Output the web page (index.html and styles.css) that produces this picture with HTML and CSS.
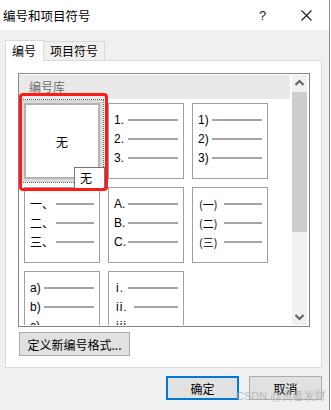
FILE: index.html
```html
<!DOCTYPE html>
<html lang="zh-CN">
<head>
  <meta charset="UTF-8">
  <title>编号和项目符号</title>
  <link rel="stylesheet" href="styles.css">
</head>
<body>
<div class="dialog">
  <div class="titlebar">
    <span class="title">编号和项目符号</span>
    <span class="help">?</span>
    <span class="close">
      <svg width="11" height="11" viewBox="0 0 11 11"><path d="M0.5 0.5 L10.5 10.5 M10.5 0.5 L0.5 10.5" stroke="#1a1a1a" stroke-width="1.1" fill="none"/></svg>
    </span>
  </div>

  <div class="content">
    <!-- 탭 -->
    <div class="tabs">
      <div class="tab on">编号</div>
      <div class="tab">项目符号</div>
    </div>

    <div class="panel">
      <div class="library">
        <div class="lib-main">
          <div class="lib-head">编号库</div>
          <div class="grid">
            <div class="cell sel"><span class="none">无</span></div>
            <div class="cell">
              <div class="row"><span>1.</span><i class="line"></i></div>
              <div class="row"><span>2.</span><i class="line"></i></div>
              <div class="row"><span>3.</span><i class="line"></i></div>
            </div>
            <div class="cell">
              <div class="row"><span>1)</span><i class="line"></i></div>
              <div class="row"><span>2)</span><i class="line"></i></div>
              <div class="row"><span>3)</span><i class="line"></i></div>
            </div>
            <div class="cell">
              <div class="row"><span class="cn">一、</span><i class="line short"></i></div>
              <div class="row"><span class="cn">二、</span><i class="line short"></i></div>
              <div class="row"><span class="cn">三、</span><i class="line short"></i></div>
            </div>
            <div class="cell">
              <div class="row"><span>A.</span><i class="line"></i></div>
              <div class="row"><span>B.</span><i class="line"></i></div>
              <div class="row"><span>C.</span><i class="line"></i></div>
            </div>
            <div class="cell">
              <div class="row"><span class="cn paren">(一)</span><i class="line short"></i></div>
              <div class="row"><span class="cn paren">(二)</span><i class="line short"></i></div>
              <div class="row"><span class="cn paren">(三)</span><i class="line short"></i></div>
            </div>
            <div class="cell">
              <div class="row"><span>a)</span><i class="line"></i></div>
              <div class="row"><span>b)</span><i class="line"></i></div>
              <div class="row"><span>c)</span><i class="line"></i></div>
            </div>
            <div class="cell">
              <div class="row"><span class="roman">i.</span><i class="line"></i></div>
              <div class="row"><span class="roman">ii.</span><i class="line mid"></i></div>
              <div class="row"><span class="roman">iii.</span><i class="line short"></i></div>
            </div>
          </div>
        </div>

        <!-- 스크롤바 -->
        <div class="scrollbar">
          <div class="sb-btn">
            <svg width="15" height="17" viewBox="0 0 15 17"><polyline points="3.5,10 7.5,6 11.5,10" stroke="#606060" stroke-width="2" fill="none"/></svg>
          </div>
          <div class="sb-track"><div class="sb-thumb"></div></div>
          <div class="sb-btn">
            <svg width="15" height="17" viewBox="0 0 15 17"><polyline points="3.5,7 7.5,11 11.5,7" stroke="#606060" stroke-width="2" fill="none"/></svg>
          </div>
        </div>

        <div class="tip">无</div>
        <div class="mark"></div>
      </div>

      <button class="btn define">定义新编号格式...</button>
    </div>

    <div class="actions">
      <button class="btn primary">确定</button>
      <button class="btn">取消</button>
    </div>
    <span class="watermark">CSDN @贤者发财__</span>
  </div>
</div>
</body>
</html>
```

FILE: styles.css
```css
/* reset */
* {
  margin: 0;
  padding: 0;
  box-sizing: border-box;
}
body {
  background: #fff;
  font-family: "Liberation Sans", "Noto Sans CJK SC", sans-serif;
  font-size: 12px;
  color: #000;
}
button {
  font-family: inherit;
  font-size: 12px;
  color: #000;
}

/* 창 */
.dialog {
  width: 330px;
  height: 410px;
  border-right: 1px solid #8f8f8f;
  background: #f0f0f0;
}

.titlebar {
  display: flex;
  align-items: center;
  height: 30px;
  background: #fff;
  padding-left: 3px;
}
.title {
  font-family: "Noto Sans CJK SC", sans-serif;
  font-size: 12.5px;
  flex: 1;
}
.help {
  font-size: 13px;
  width: 42px;
  color: #1a1a1a;
}
.close {
  display: flex;
  width: 28px;
}

.content {
  position: relative;
  padding: 10px 0 0 5px;
  height: 380px;
}

/* 탭 */
.tabs {
  position: relative;
  z-index: 1;
  display: flex;
  align-items: flex-end;
  height: 21px;
  margin-bottom: -1px;
  font-family: "Noto Sans CJK SC", sans-serif;
}
.tab {
  height: 20px;
  line-height: 18px;
  padding: 0 6px;
  border: 1px solid #d9d9d9;
  border-left: 0;
  background: #f0f0f0;
}
.tab.on {
  height: 21px;
  line-height: 19px;
  width: 39px;
  border-left: 1px solid #d9d9d9;
  border-bottom: 0;
  background: #fff;
}

.panel {
  width: 317px;
  height: 308px;
  background: #fff;
  border: 1px solid #d9d9d9;
  padding: 12px 0 0 12px;
}

/* 编号库 */
.library {
  position: relative;
  display: flex;
  width: 292px;
  height: 254px;
  border: 1px solid #828790;
  padding: 1px 2px 1px 0;
}
.lib-main {
  width: 271px;
  margin-right: 2px;
  overflow: hidden;
}
.lib-head {
  height: 24px;
  line-height: 24px;
  padding-left: 10px;
  background: #e9e9e9;
  color: #6d6d6d;
  font-family: "Noto Sans CJK SC", sans-serif;
}
.grid {
  display: grid;
  grid-template-columns: repeat(3, 76px);
  grid-auto-rows: 76px;
  gap: 8px;
  padding: 4px 0 0 5px;
}
.cell {
  border: 1px solid #a0a0a0;
  padding: 6px 5px 0 5px;
}
.cell.sel {
  display: flex;
  align-items: center;
  justify-content: center;
  padding: 0;
  border: 2px solid #b4b4b4;
  box-shadow: 0 0 0 3px #dadada;
  outline: 1px dotted #5a5a5a;
  outline-offset: 3px;
}
.none {
  font-family: "Noto Sans CJK SC", sans-serif;
}
.row {
  display: flex;
  align-items: center;
  height: 19px;
}
.row .cn {
  font-family: "Noto Sans CJK SC", sans-serif;
}
.row .paren {
  font-size: 11px;
  padding-left: 1px;
}
.row .roman {
  padding-left: 2px;
  letter-spacing: 1px;
}
.line {
  width: 50px;
  height: 2px;
  margin-left: auto;
  background: #a5a5a5;
}
.line.mid {
  width: 44px;
}
.line.short {
  width: 38px;
}

/* 스크롤바 */
.scrollbar {
  display: flex;
  flex-direction: column;
  width: 15px;
  background: #f0f0f0;
}
.sb-btn {
  height: 17px;
  display: flex;
}
.sb-track {
  flex: 1;
}
.sb-thumb {
  height: 140px;
  background: #cdcdcd;
}

/* 툴팁, 빨간 표시 */
.tip {
  position: absolute;
  left: 55px;
  top: 93px;
  width: 31px;
  height: 22px;
  line-height: 20px;
  padding-left: 5px;
  background: #fff;
  border: 1px solid #767676;
  font-family: "Noto Sans CJK SC", sans-serif;
}
.mark {
  position: absolute;
  left: 0;
  top: 19px;
  width: 89px;
  height: 98px;
  border: 3px solid #ff1a14;
  border-radius: 4px;
}

/* 버튼 */
.btn {
  height: 24px;
  background: #e1e1e1;
  border: 1px solid #adadad;
  font-family: "Noto Sans CJK SC", sans-serif;
}
.btn.define {
  width: 111px;
  margin: 5px 0 0 1px;
}
.actions {
  display: flex;
  justify-content: flex-end;
  gap: 10px;
  width: 317px;
  margin-top: 8px;
}
.actions .btn {
  width: 73px;
}
.btn.primary {
  border: 2px solid #0078d7;
}

.watermark {
  position: absolute;
  left: 236px;
  top: 357px;
  font-size: 11px;
  color: rgba(170, 170, 170, 0.75);
  font-family: "Liberation Sans", "Noto Sans CJK SC", sans-serif;
}
```
